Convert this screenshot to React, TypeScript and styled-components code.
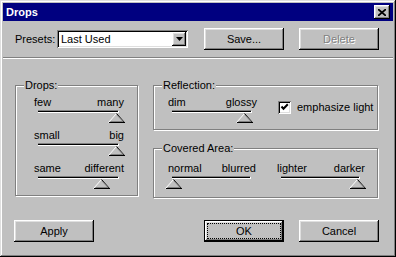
import React from 'react';
import styled, { createGlobalStyle } from 'styled-components';

const Colors = {
  face: '#c0c0c0',
  light: '#dfdfdf',
  highlight: '#ffffff',
  shadow: '#808080',
  dark: '#000000',
  title: '#000080',
};

const GlobalStyle = createGlobalStyle`
  html, body {
    margin: 0;
    padding: 0;
    background: ${Colors.face};
  }
  body {
    font-family: "Liberation Sans", Arial, sans-serif;
    font-size: 11px;
    color: #000;
  }
  * {
    box-sizing: border-box;
  }
`;

const raised = `inset -1px -1px ${Colors.dark}, inset 1px 1px ${Colors.highlight}, inset -2px -2px ${Colors.shadow}, inset 2px 2px ${Colors.light}`;
const sunken = `inset 1px 1px ${Colors.shadow}, inset -1px -1px ${Colors.highlight}, inset 2px 2px ${Colors.dark}, inset -2px -2px ${Colors.light}`;

const Window = styled.div`
  width: 396px;
  height: 257px;
  padding: 3px;
  background: ${Colors.face};
  box-shadow: inset -1px -1px ${Colors.dark}, inset 1px 1px ${Colors.light}, inset -2px -2px ${Colors.shadow}, inset 2px 2px ${Colors.highlight};
  display: flex;
  flex-direction: column;
`;

const TitleBar = styled.div`
  height: 18px;
  background: ${Colors.title};
  display: flex;
  align-items: center;
  justify-content: space-between;
  padding: 0 3px 0 3px;
`;

const TitleText = styled.span`
  color: #fff;
  font-weight: bold;
  font-size: 11px;
`;

const CloseButton = styled.div`
  width: 16px;
  height: 14px;
  background: ${Colors.face};
  box-shadow: ${raised};
  display: flex;
  align-items: center;
  justify-content: center;
`;

const TopRow = styled.div`
  display: flex;
  align-items: center;
  height: 22px;
  margin-top: 7px;
  padding-left: 12px;
`;

const Label = styled.span<{ $w?: number }>`
  width: ${p => (p.$w ? `${p.$w}px` : 'auto')};
  line-height: 13px;
  white-space: nowrap;
`;

const Combo = styled.div`
  width: 131px;
  height: 18px;
  padding: 2px;
  background: #fff;
  box-shadow: ${sunken};
  display: flex;
  align-items: stretch;
`;

const ComboText = styled.div`
  flex: 1;
  padding-left: 2px;
  line-height: 14px;
`;

const ComboArrow = styled.div`
  width: 14px;
  background: ${Colors.face};
  box-shadow: ${raised};
  display: flex;
  align-items: center;
  justify-content: center;
`;

const Button = styled.button<{ $isDefault?: boolean; $ml?: number }>`
  width: 80px;
  height: 22px;
  margin-left: ${p => p.$ml ?? 0}px;
  padding: 3px;
  border: none;
  font: inherit;
  background: ${Colors.face};
  color: ${p => (p.disabled ? Colors.shadow : '#000')};
  text-shadow: ${p => (p.disabled ? `1px 1px ${Colors.highlight}` : 'none')};
  box-shadow: ${p =>
    p.$isDefault
      ? `inset 0 0 0 1px ${Colors.dark}, inset -2px -2px ${Colors.dark}, inset 2px 2px ${Colors.highlight}, inset -3px -3px ${Colors.shadow}, inset 3px 3px ${Colors.light}`
      : raised};
  display: flex;
`;

const ButtonFace = styled.span<{ $focus?: boolean }>`
  flex: 1;
  display: flex;
  align-items: center;
  justify-content: center;
  border: 1px dotted ${p => (p.$focus ? '#000' : 'transparent')};
`;

const Separator = styled.div`
  height: 2px;
  margin-top: 7px;
  border-top: 1px solid ${Colors.shadow};
  border-bottom: 1px solid ${Colors.highlight};
`;

const Middle = styled.div`
  display: flex;
  gap: 15px;
  padding: 26px 0 0 12px;
`;

const Column = styled.div`
  display: flex;
  flex-direction: column;
  gap: 18px;
`;

const GroupBox = styled.div<{ $w: number; $h: number; $pl: number }>`
  width: ${p => p.$w}px;
  height: ${p => p.$h}px;
  border: 1px solid ${Colors.shadow};
  box-shadow: inset 1px 1px ${Colors.highlight}, 1px 1px ${Colors.highlight};
  padding: 0 0 0 8px;
  display: flex;
  flex-direction: column;
  & > div:not(:first-child) {
    margin-left: ${p => p.$pl}px;
  }
`;

const Caption = styled.div`
  width: fit-content;
  height: 13px;
  margin-top: -7px;
  padding: 0 1px;
  line-height: 13px;
  background: ${Colors.face};
`;

const SliderStack = styled.div<{ $mt: number }>`
  margin-top: ${p => p.$mt}px;
  display: flex;
  flex-direction: column;
  gap: 6px;
`;

const SliderLine = styled.div<{ $mt: number }>`
  margin-top: ${p => p.$mt}px;
  display: flex;
  align-items: flex-start;
  gap: 21px;
`;

const SliderWrap = styled.div<{ $w: number }>`
  width: ${p => p.$w}px;
  display: flex;
  flex-direction: column;
`;

const SliderLabels = styled.div`
  display: flex;
  justify-content: space-between;
  height: 13px;
  line-height: 13px;
  margin-bottom: 1px;
  white-space: nowrap;
`;

const Track = styled.div`
  height: 3px;
  margin: 0 5px 0 4px;
  background: ${Colors.dark};
  border-top: 1px solid ${Colors.shadow};
  border-bottom: 1px solid ${Colors.highlight};
  border-right: 1px solid ${Colors.highlight};
`;

const ThumbRow = styled.div`
  height: 10px;
  display: flex;
`;

const CheckRow = styled.label`
  margin-top: 5px;
  display: flex;
  align-items: center;
  gap: 6px;
  line-height: 13px;
`;

const CheckBox = styled.span`
  width: 13px;
  height: 13px;
  background: #fff;
  box-shadow: ${sunken};
  display: flex;
  align-items: center;
  justify-content: center;
`;

const BottomRow = styled.div`
  display: flex;
  margin-top: 22px;
  padding-left: 11px;
`;

const Thumb = () => (
  <svg width="17" height="10" viewBox="0 0 17 10">
    <polygon points="8.5,0.5 0.5,9.5 16.5,9.5" fill={Colors.face} />
    <path d="M0.5 9.5 L8.5 0.5" stroke={Colors.highlight} strokeWidth="1" fill="none" />
    <path d="M8.5 0.5 L16.5 9.5" stroke={Colors.dark} strokeWidth="1" fill="none" />
    <path d="M1 9.5 H17" stroke={Colors.dark} strokeWidth="1" />
    <path d="M2.5 8.5 H15" stroke={Colors.shadow} strokeWidth="1" />
    <path d="M9 2 L15 8.5" stroke={Colors.shadow} strokeWidth="1" fill="none" />
  </svg>
);

interface SliderProps {
  min: string;
  max: string;
  value: number;
  width?: number;
}

const Slider = ({ min, max, value, width = 90 }: SliderProps): JSX.Element => (
  <SliderWrap $w={width}>
    <SliderLabels>
      <span>{min}</span>
      <span>{max}</span>
    </SliderLabels>
    <Track />
    <ThumbRow>
      <span style={{ marginLeft: Math.round(-3 + value * (width - 13)) }}>
        <Thumb />
      </span>
    </ThumbRow>
  </SliderWrap>
);

const App = (): JSX.Element => (
  <>
    <GlobalStyle />
    <Window>
      <TitleBar>
        <TitleText>Drops</TitleText>
        <CloseButton>
          <svg width="8" height="7" viewBox="0 0 8 7">
            <path d="M0 0 L8 7 M8 0 L0 7" stroke="#000" strokeWidth="1.7" />
          </svg>
        </CloseButton>
      </TitleBar>

      <TopRow>
        <Label $w={42}>Presets:</Label>
        <Combo>
          <ComboText>Last Used</ComboText>
          <ComboArrow>
            <svg width="7" height="4" viewBox="0 0 7 4">
              <polygon points="0,0 7,0 3.5,4" fill="#000" />
            </svg>
          </ComboArrow>
        </Combo>
        <Button $ml={16}>
          <ButtonFace>Save...</ButtonFace>
        </Button>
        <Button $ml={15} disabled>
          <ButtonFace>Delete</ButtonFace>
        </Button>
      </TopRow>

      <Separator />

      <Middle>
        <GroupBox $w={123} $h={111} $pl={10}>
          <Caption>Drops:</Caption>
          <SliderStack $mt={4}>
            <Slider min="few" max="many" value={1} />
            <Slider min="small" max="big" value={1} />
            <Slider min="same" max="different" value={0.8} />
          </SliderStack>
        </GroupBox>

        <Column>
          <GroupBox $w={225} $h={45} $pl={6}>
            <Caption>Reflection:</Caption>
            <SliderLine $mt={4}>
              <Slider min="dim" max="glossy" value={0.93} width={89} />
              <CheckRow>
                <CheckBox>
                  <svg width="9" height="9" viewBox="0 0 9 9">
                    <path d="M1.5 3.5 L3.5 5.8 L7.8 1.2" stroke="#000" strokeWidth="2" fill="none" />
                  </svg>
                </CheckBox>
                emphasize light
              </CheckRow>
            </SliderLine>
          </GroupBox>

          <GroupBox $w={225} $h={50} $pl={6}>
            <Caption>Covered Area:</Caption>
            <SliderLine $mt={7}>
              <Slider min="normal" max="blurred" value={0} width={88} />
              <Slider min="lighter" max="darker" value={1} width={88} />
            </SliderLine>
          </GroupBox>
        </Column>
      </Middle>

      <BottomRow>
        <Button>
          <ButtonFace>Apply</ButtonFace>
        </Button>
        <Button $ml={110} $isDefault>
          <ButtonFace $focus>OK</ButtonFace>
        </Button>
        <Button $ml={15}>
          <ButtonFace>Cancel</ButtonFace>
        </Button>
      </BottomRow>
    </Window>
  </>
);

export default App;
